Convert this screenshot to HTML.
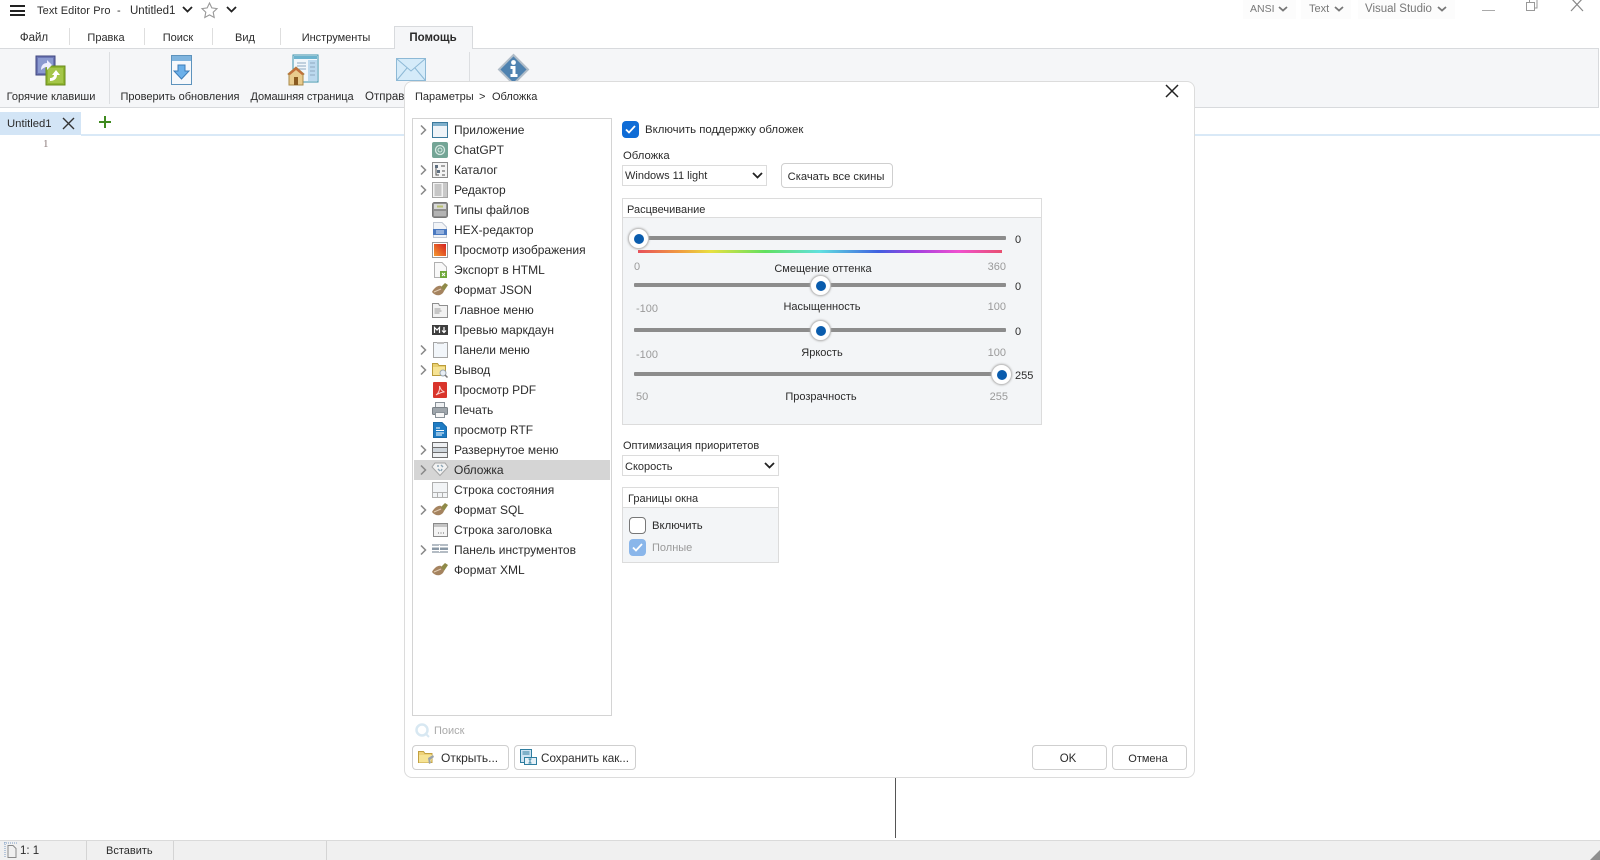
<!DOCTYPE html>
<html lang="ru"><head><meta charset="utf-8"><title>Text Editor Pro</title>
<style>
html,body{margin:0;padding:0;background:#fff}
#p{position:relative;width:1600px;height:860px;overflow:hidden;background:#fff;font:11px "Liberation Sans","Noto Sans CJK SC",sans-serif;color:#2b2b2b}
.t{position:absolute;white-space:nowrap;line-height:16px;height:16px;margin-top:1px}
.l{font-size:12px;margin-top:0}
.c{transform:translateX(-50%)}
.r{transform:translateX(-100%)}
.b{position:absolute;box-sizing:border-box}
.g{color:#9a9a9a}
svg{position:absolute;overflow:visible}
.btn{position:absolute;box-sizing:border-box;background:#fff;border:1px solid #cfcfcf;border-radius:4px}
.trk{position:absolute;height:4px;background:#8c8c8c;border-radius:1px}
.th{position:absolute;width:21px;height:21px;box-sizing:border-box;border-radius:50%;background:#fff;border:1px solid #c4c4c4;box-shadow:0 0 2px #aaa}
.th:after{content:"";position:absolute;left:4.5px;top:4.5px;width:10px;height:10px;border-radius:50%;background:#0a5cad}
</style></head><body><div id="p">

<!-- title bar -->
<div class="b" style="left:10px;top:5px;width:15px;height:2px;background:#222"></div>
<div class="b" style="left:10px;top:10px;width:15px;height:2px;background:#222"></div>
<div class="b" style="left:10px;top:14px;width:15px;height:2px;background:#222"></div>
<div class="t" style="left:37px;top:2px;letter-spacing:.1px">Text Editor Pro</div>
<div class="t" style="left:117px;top:2px">-</div>
<div class="t" style="left:130px;top:2px;font-size:11.5px">Untitled1</div>
<svg style="left:182px;top:6px" width="11" height="7" fill="none" stroke="#222" stroke-width="1.8"><path d="M1 1l4.5 4.5L10 1"/></svg>
<svg style="left:201px;top:2px" width="17" height="16" fill="#fff" stroke="#999" stroke-width="1.1"><path d="M8.500 1l2.300 4.900 5.200.7-3.800 3.600 1 5.300-4.700-2.600-4.700 2.600 1-5.300L1 6.600l5.200-.7z"/></svg>
<svg style="left:226px;top:6px" width="11" height="7" fill="none" stroke="#222" stroke-width="1.8"><path d="M1 1l4.500 4.500L10 1"/></svg>

<div class="b" style="left:1243px;top:0;width:53px;height:19px;background:#fcfcfc"></div>
<div class="b" style="left:1301px;top:0;width:50px;height:19px;background:#fcfcfc"></div>
<div class="b" style="left:1358px;top:0;width:97px;height:19px;background:#fcfcfc"></div>
<div class="t" style="left:1250px;top:0;color:#777;font-size:10.5px">ANSI</div>
<svg style="left:1278px;top:6px" width="10" height="6" fill="none" stroke="#777" stroke-width="1.800"><path d="M1 1l4 3.500L9 1"/></svg>
<div class="t" style="left:1309px;top:0;color:#777;font-size:11px">Text</div>
<svg style="left:1334px;top:6px" width="10" height="6" fill="none" stroke="#777" stroke-width="1.800"><path d="M1 1l4 3.500L9 1"/></svg>
<div class="t" style="left:1365px;top:0;color:#777;font-size:11.5px">Visual Studio</div>
<svg style="left:1437px;top:6px" width="10" height="6" fill="none" stroke="#777" stroke-width="1.800"><path d="M1 1l4 3.500L9 1"/></svg>
<div class="b" style="left:1482px;top:10px;width:13px;height:1px;background:#aaa"></div>
<svg style="left:1526px;top:0" width="12" height="11" fill="none" stroke="#999"><path d="M.5 2.500h8v8h-8zM3.500 2.500V0M8.500 8h2.500V0"/></svg>
<svg style="left:1570px;top:0" width="15" height="11" fill="none" stroke="#888" stroke-width="1.200"><path d="M1-2l12 13M13-2L1 11"/></svg>

<!-- menu tabs -->
<div class="t c" style="left:34px;top:29px;font-size:11.500px">Файл</div>
<div class="t c" style="left:106px;top:29px">Правка</div>
<div class="t c" style="left:178px;top:29px">Поиск</div>
<div class="t c" style="left:245px;top:29px">Вид</div>
<div class="t c" style="left:336px;top:29px">Инструменты</div>
<div class="b" style="left:69px;top:28px;width:1px;height:17px;background:#dedede"></div>
<div class="b" style="left:144px;top:28px;width:1px;height:17px;background:#dedede"></div>
<div class="b" style="left:212px;top:28px;width:1px;height:17px;background:#dedede"></div>
<div class="b" style="left:280px;top:28px;width:1px;height:17px;background:#dedede"></div>

<!-- ribbon -->
<div class="b" style="left:0;top:48px;width:1599px;height:60px;background:#f5f6f8;border-top:1px solid #d8dadd;border-bottom:1px solid #d8dadd;border-right:1px solid #d8dadd"></div>
<div class="b" style="left:394px;top:26px;width:79px;height:23px;background:#f5f6f8;border:1px solid #d8dadd;border-bottom:0"></div>
<div class="t c" style="left:433px;top:29px;font-weight:bold;font-size:11.500px">Помощь</div>
<div class="b" style="left:109px;top:52px;width:1px;height:52px;background:#dcdee1"></div>
<div class="b" style="left:469px;top:52px;width:1px;height:30px;background:#dcdee1"></div>

<svg style="left:35px;top:55px" width="32" height="31">
<rect x="1" y="1" width="19" height="19" fill="#6c76b5" stroke="#3f477f"/><rect x="3" y="3" width="15" height="15" fill="#8b9ad0"/>
<rect x="11" y="11" width="19" height="19" fill="#8fb52f" stroke="#6a8a1c"/><rect x="13" y="13" width="15" height="15" fill="#a5c64a"/>
<path d="M6 15c0-5 3-7 6-7V5l5 5-5 5v-3c-2 0-4 1-6 3z" fill="#eef"/><path d="M15 26c4 0 7-2 7-6h3l-4-5-4 5h2c0 2-2 3-4 3z" fill="#fff"/></svg>

<svg style="left:171px;top:55px" width="22" height="31">
<rect x=".5" y=".5" width="20" height="29" fill="#f6f8fb" stroke="#5d93bd"/><rect x="1" y="1" width="19" height="5" fill="#7fb4de"/>
<path d="M7 10h7v6h4l-7.500 8L3 16h4z" fill="#6bb0ea" stroke="#3d7db8"/></svg>

<svg style="left:288px;top:54px" width="32" height="33">
<rect x="5" y="1" width="25" height="27" fill="#f2f7fb" stroke="#3b93ad"/><rect x="6" y="2" width="23" height="3" fill="#6cb3ce"/><rect x="20" y="6" width="9" height="21" fill="#bcd9ee"/>
<path d="M9 9h9M9 12h9M9 15h9M22 9h5M22 13h5M22 17h5M22 21h5" stroke="#8fa9c0"/>
<path d="M0 20l8-7 8 7-1 1v10H1V21z" fill="#e9cb8d" stroke="#a98a4a"/><path d="M0 20l8-7 8 7-2 1-6-5-6 5z" fill="#c26f3a"/><rect x="6" y="23" width="4" height="8" fill="#8a5a20"/></svg>

<svg style="left:396px;top:58px" width="31" height="24">
<rect x=".5" y=".5" width="29" height="22" fill="#d5ebf9" stroke="#8db9d6"/><path d="M1 1l14 12L29 1M1 22l10-12M29 22L19 10" fill="none" stroke="#8db9d6"/></svg>

<svg style="left:498px;top:54px" width="31" height="28">
<path d="M15.500 1L30 15.500 15.500 30 1 15.500z" fill="#4f82b0" stroke="#b0bcc8" stroke-width="2"/>
<circle cx="15.500" cy="8.500" r="2.400" fill="#fff"/><path d="M12.500 12h5v8h2v3h-7v-3h2v-5h-2z" fill="#fff"/></svg>

<div class="t c" style="left:51px;top:88px">Горячие клавиши</div>
<div class="t c" style="left:180px;top:88px">Проверить обновления</div>
<div class="t c" style="left:302px;top:88px;letter-spacing:-.1px">Домашняя страница</div>
<div class="t" style="left:365px;top:88px;font-size:11.500px">Отправ</div>

<!-- doc tab -->
<div class="b" style="left:0;top:112px;width:81px;height:23px;background:#d3e5f6"></div>
<div class="b" style="left:81px;top:134px;width:1519px;height:2px;background:#d9e9f7"></div>
<div class="t" style="left:7px;top:115px;font-size:11.300px">Untitled1</div>
<svg style="left:62px;top:117px" width="13" height="13" fill="none" stroke="#333" stroke-width="1.400"><path d="M1 1l11 11M12 1L1 12"/></svg>
<svg style="left:99px;top:116px" width="12" height="12" fill="none" stroke="#3f8a1f" stroke-width="2"><path d="M6 0v12M0 6h12"/></svg>
<div class="t" style="left:43px;top:135px;font:11px/16px 'Liberation Serif',serif;color:#8a7a7a">1</div>

<!-- status bar -->
<div class="b" style="left:0;top:840px;width:1600px;height:20px;background:#f0f0f0;border-top:1px solid #dadada"></div>
<div class="b" style="left:86px;top:841px;width:1px;height:19px;background:#d4d4d4"></div>
<div class="b" style="left:173px;top:841px;width:1px;height:19px;background:#d4d4d4"></div>
<div class="b" style="left:326px;top:841px;width:1px;height:19px;background:#d4d4d4"></div>
<svg style="left:3px;top:841px" width="14" height="17" fill="none" stroke="#8a8a8a"><path d="M5 4.500h5l3 3v9H5z"/><path d="M1 2h13M2 1v16" stroke="#7c9cc4" stroke-dasharray="1 1"/></svg>
<div class="t" style="left:20px;top:842px;font-size:11.500px">1: 1</div>
<div class="t" style="left:106px;top:842px">Вставить</div>
<svg style="left:1590px;top:850px" width="10" height="10"><path d="M10 0v10H0z" fill="#8f8f8f"/></svg>
<div class="b" style="left:895px;top:777px;width:1px;height:61px;background:#555"></div>

<!-- dialog -->
<div class="b" style="left:404px;top:81px;width:791px;height:697px;background:#fff;border:1px solid #dcdcdc;border-radius:8px"></div>
<div class="t" style="left:415px;top:88px">Параметры</div>
<div class="t" style="left:479px;top:88px">&gt;</div>
<div class="t" style="left:492px;top:88px">Обложка</div>
<svg style="left:1165px;top:84px" width="14" height="14" fill="none" stroke="#222" stroke-width="1.500"><path d="M1 1l12 12M13 1L1 13"/></svg>

<!-- tree -->
<div class="b" style="left:412px;top:118px;width:200px;height:598px;border:1px solid #d4d4d4;background:#fff"></div>
<div class="b" style="left:414px;top:460px;width:196px;height:20px;background:#d5d5d5"></div>

<svg style="left:420px;top:125px" width="7" height="10" fill="none" stroke="#888" stroke-width="1.500"><path d="M1 .5l4.500 4.500L1 9.500"/></svg>
<svg style="left:420px;top:165px" width="7" height="10" fill="none" stroke="#888" stroke-width="1.500"><path d="M1 .5l4.500 4.500L1 9.500"/></svg>
<svg style="left:420px;top:185px" width="7" height="10" fill="none" stroke="#888" stroke-width="1.500"><path d="M1 .5l4.500 4.500L1 9.500"/></svg>
<svg style="left:420px;top:345px" width="7" height="10" fill="none" stroke="#888" stroke-width="1.500"><path d="M1 .5l4.500 4.500L1 9.500"/></svg>
<svg style="left:420px;top:365px" width="7" height="10" fill="none" stroke="#888" stroke-width="1.500"><path d="M1 .5l4.500 4.500L1 9.500"/></svg>
<svg style="left:420px;top:445px" width="7" height="10" fill="none" stroke="#888" stroke-width="1.500"><path d="M1 .5l4.500 4.500L1 9.500"/></svg>
<svg style="left:420px;top:465px" width="7" height="10" fill="none" stroke="#888" stroke-width="1.500"><path d="M1 .5l4.500 4.500L1 9.500"/></svg>
<svg style="left:420px;top:505px" width="7" height="10" fill="none" stroke="#888" stroke-width="1.500"><path d="M1 .5l4.500 4.500L1 9.500"/></svg>
<svg style="left:420px;top:545px" width="7" height="10" fill="none" stroke="#888" stroke-width="1.500"><path d="M1 .5l4.500 4.500L1 9.500"/></svg>

<!-- tree icons -->
<svg style="left:432px;top:122px" width="16" height="16"><rect x=".5" y=".5" width="15" height="15" fill="#f0f4f8" stroke="#3d7a9c"/><rect x="1" y="1" width="14" height="3" fill="#7fb0cc"/></svg>
<svg style="left:432px;top:142px" width="16" height="16"><rect width="16" height="16" rx="2" fill="#74a596"/><circle cx="8" cy="8" r="4.500" fill="none" stroke="#d6e8e2" stroke-width="1.300"/><circle cx="8" cy="8" r="2" fill="none" stroke="#d6e8e2"/></svg>
<svg style="left:432px;top:162px" width="16" height="16"><rect x=".5" y=".5" width="15" height="15" fill="#f4f4f4" stroke="#8a8a8a"/><path d="M3 3h3v3H3zM5 8h3v3H5z" fill="#5f6f80"/><path d="M4 6v7h3M9 4h4M10 9h3M10 13h3" fill="none" stroke="#555"/></svg>
<svg style="left:432px;top:182px" width="16" height="16"><rect x=".5" y=".5" width="15" height="15" fill="#f2f2f2" stroke="#a5a5a5"/><path d="M2.500 3h7M2.500 5h7M2.500 7h7M2.500 9h7M2.500 11h7M2.500 13h7" stroke="#9a9a9a"/><rect x="11" y="1" width="4" height="14" fill="#c9c9c9"/></svg>
<svg style="left:432px;top:202px" width="16" height="16"><rect x=".5" y=".5" width="15" height="15" rx="2" fill="#8f8f8f" stroke="#777"/><rect x="2" y="2" width="12" height="5" fill="#d8d8d8"/><rect x="5" y="3.500" width="6" height="2" fill="#b8c070"/><rect x="2" y="9" width="12" height="5" fill="#b4b4b4"/></svg>
<svg style="left:433px;top:222px" width="14" height="16"><path d="M.5.500H9L13.500 5v10.500H.500z" fill="#f2f4f7" stroke="#c0c8d4"/><rect x="0" y="7" width="14" height="6" fill="#4a79c0"/><path d="M3 9h8M3 11h8" stroke="#dce8f8"/></svg>
<svg style="left:432px;top:242px" width="16" height="16"><defs><linearGradient id="im" x1="1" y1="0" x2="0" y2="1"><stop offset="0" stop-color="#d42020"/><stop offset="1" stop-color="#f59a30"/></linearGradient></defs><rect x=".5" y=".5" width="15" height="15" fill="#fff" stroke="#9a9a9a"/><rect x="2" y="2" width="12" height="12" fill="url(#im)"/></svg>
<svg style="left:434px;top:262px" width="14" height="16"><path d="M.5.500H8L12.500 5v10.500H.500z" fill="#f8f8f8" stroke="#b0b0b0"/><rect x="6" y="9" width="7" height="7" fill="#6fa83a"/><path d="M8 11l3 3M11 11l-3 3" stroke="#fff"/></svg>
<svg style="left:432px;top:282px" width="16" height="16"><path d="M0 10C2 6 6 3 9 4l3 5c-2 5-8 6-12 1z" fill="#a5835f"/><path d="M9 5l4-4 3 2-4 6z" fill="#8f8a48"/><path d="M2 10l7-3" stroke="#e2cdb3"/></svg>
<svg style="left:432px;top:302px" width="16" height="16"><path d="M.5 1.500h6l1 2h8v12H.500z" fill="#f2f2f2" stroke="#8f8f8f"/><path d="M2.500 7h6M2.500 9h7M2.500 11h5" stroke="#9a9a9a"/></svg>
<svg style="left:432px;top:325px" width="16" height="10"><rect width="16" height="10" fill="#3e3e3e"/><path d="M2.500 8V2.500L5 5l2.500-2.500V8M12 2v5M10 5.500l2 2 2-2" fill="none" stroke="#fff" stroke-width="1.200"/></svg>
<svg style="left:433px;top:342px" width="15" height="16"><rect x=".5" y=".5" width="14" height="15" fill="#f2f6fa" stroke="#a5a5a5"/><rect x="4" y="0" width="7" height="2" fill="#c0c0c0"/></svg>
<svg style="left:432px;top:362px" width="16" height="16"><path d="M.5 1.500h5l1.500 2h6.500v10H.500z" fill="#e9cf6e" stroke="#b99b3a"/><rect x="1" y="5" width="12" height="8" fill="#f6e394"/><circle cx="11" cy="11" r="3" fill="#e8eef4" stroke="#9aa6b2"/><path d="M13 13l2.500 2.500" stroke="#777" stroke-width="1.500"/></svg>
<svg style="left:433px;top:382px" width="14" height="16"><rect width="14" height="16" rx="1" fill="#d9342b"/><path d="M3 13c3-2 4-6 3.500-9 1 3 2 5 5 6-3 0-5 1-8.500 3z" fill="none" stroke="#fbd7d5"/></svg>
<svg style="left:432px;top:402px" width="16" height="16"><rect x="3.500" y=".5" width="9" height="5" fill="#eef0f2" stroke="#8a9299"/><rect x=".5" y="5.500" width="15" height="7" rx="1" fill="#9ea5ab" stroke="#7a8187"/><rect x="3.500" y="10.500" width="9" height="5" fill="#f6f6f6" stroke="#8a9299"/></svg>
<svg style="left:433px;top:422px" width="14" height="16"><path d="M.5.500H9L13.500 5v10.500H.500z" fill="#1f7cc4" stroke="#1a6aa8"/><path d="M3 6h4M3 8.500h8M3 11h8M3 13h6" stroke="#fff"/></svg>
<svg style="left:432px;top:442px" width="16" height="16"><rect x=".5" y=".5" width="15" height="15" fill="#eef0f2" stroke="#6e6e6e"/><path d="M1 5.500h14M1 10.500h14" stroke="#6e6e6e"/><rect x="1" y="6" width="14" height="4" fill="#cfd6dc"/></svg>
<svg style="left:432px;top:462px" width="16" height="14"><path d="M3 1h10l3 4-8 8.500L0 5z" fill="#f2f2f2" stroke="#a5a5a5"/><path d="M5 4h2M9 3l2 2M6 7l2 2M10 7l-1 2" stroke="#8da5b5" stroke-width="1.400"/></svg>
<svg style="left:432px;top:482px" width="16" height="16"><rect x=".5" y=".5" width="15" height="15" fill="#f2f4f6" stroke="#b0b0b0"/><path d="M1 10.500h14M5.500 10.500V15M10.500 10.500V15" stroke="#b0b0b0"/></svg>
<svg style="left:432px;top:502px" width="16" height="16"><path d="M0 10C2 6 6 3 9 4l3 5c-2 5-8 6-12 1z" fill="#a5835f"/><path d="M9 5l4-4 3 2-4 6z" fill="#8f8a48"/><path d="M2 10l7-3" stroke="#e2cdb3"/></svg>
<svg style="left:433px;top:522px" width="15" height="16"><rect x=".5" y="1.500" width="14" height="13" fill="#f4f4f4" stroke="#8a8a8a"/><rect x="1" y="2" width="13" height="3" fill="#c4c4c4"/><path d="M5 11h1M7.500 11h1M10 11h1" stroke="#666"/></svg>
<svg style="left:432px;top:544px" width="16" height="9"><rect y="0" width="16" height="2" fill="#b4bcc4"/><rect y="3.500" width="16" height="2.500" fill="#8a98a6"/><rect y="7" width="16" height="2" fill="#b4bcc4"/><rect x="7" y="1" width="1" height="7" fill="#fff"/></svg>
<svg style="left:432px;top:562px" width="16" height="16"><path d="M0 10C2 6 6 3 9 4l3 5c-2 5-8 6-12 1z" fill="#a5835f"/><path d="M9 5l4-4 3 2-4 6z" fill="#8f8a48"/><path d="M2 10l7-3" stroke="#e2cdb3"/></svg>

<div class="t l" style="left:454px;top:122px">Приложение</div>
<div class="t l" style="left:454px;top:142px">ChatGPT</div>
<div class="t l" style="left:454px;top:162px">Каталог</div>
<div class="t l" style="left:454px;top:182px">Редактор</div>
<div class="t l" style="left:454px;top:202px">Типы файлов</div>
<div class="t l" style="left:454px;top:222px">HEX-редактор</div>
<div class="t l" style="left:454px;top:242px">Просмотр изображения</div>
<div class="t l" style="left:454px;top:262px">Экспорт в HTML</div>
<div class="t l" style="left:454px;top:282px">Формат JSON</div>
<div class="t l" style="left:454px;top:302px">Главное меню</div>
<div class="t l" style="left:454px;top:322px">Превью маркдаун</div>
<div class="t l" style="left:454px;top:342px">Панели меню</div>
<div class="t l" style="left:454px;top:362px">Вывод</div>
<div class="t l" style="left:454px;top:382px">Просмотр PDF</div>
<div class="t l" style="left:454px;top:402px">Печать</div>
<div class="t l" style="left:454px;top:422px">просмотр RTF</div>
<div class="t l" style="left:454px;top:442px">Развернутое меню</div>
<div class="t l" style="left:454px;top:462px">Обложка</div>
<div class="t l" style="left:454px;top:482px">Строка состояния</div>
<div class="t l" style="left:454px;top:502px">Формат SQL</div>
<div class="t l" style="left:454px;top:522px">Строка заголовка</div>
<div class="t l" style="left:454px;top:542px">Панель инструментов</div>
<div class="t l" style="left:454px;top:562px">Формат XML</div>

<!-- right column -->
<div class="b" style="left:622px;top:121px;width:17px;height:17px;background:#0f6cd6;border-radius:4px"></div>
<svg style="left:625px;top:125px" width="11" height="9" fill="none" stroke="#fff" stroke-width="1.800"><path d="M1 4.500l3 3 6-6.500"/></svg>
<div class="t" style="left:645px;top:121px;font-size:11.400px">Включить поддержку обложек</div>
<div class="t" style="left:623px;top:147px;font-size:11.300px">Обложка</div>
<div class="b" style="left:622px;top:165px;width:145px;height:21px;background:#fff;border:1px solid #dcdcdc"></div>
<div class="t" style="left:625px;top:167px">Windows 11 light</div>
<svg style="left:752px;top:172px" width="11" height="7" fill="none" stroke="#222" stroke-width="1.800"><path d="M1 1l4.500 4.500L10 1"/></svg>
<div class="btn" style="left:781px;top:163px;width:112px;height:25px"></div>
<div class="t c" style="left:836px;top:168px;font-size:11.200px">Скачать все скины</div>

<!-- group 1 -->
<div class="b" style="left:622px;top:198px;width:420px;height:227px;background:#f3f5f7;border:1px solid #dcdcdc"></div>
<div class="b" style="left:623px;top:199px;width:418px;height:19px;background:#fff;border-bottom:1px solid #dcdcdc"></div>
<div class="t" style="left:627px;top:201px">Расцвечивание</div>

<div class="trk" style="left:634px;top:236px;width:372px"></div>
<div class="b" style="left:638px;top:250px;width:364px;height:3px;background:linear-gradient(90deg,#e8505a,#f0a040 12%,#e8e040 20%,#60e060 35%,#60e0e0 50%,#4060e0 66%,#a040e0 76%,#f050d0 88%,#e85070)"></div>
<div class="th" style="left:628px;top:228px"></div>
<div class="t" style="left:1015px;top:231px">0</div>
<div class="t g" style="left:634px;top:258px">0</div>
<div class="t c" style="left:823px;top:260px">Смещение оттенка</div>
<div class="t g r" style="left:1006px;top:258px">360</div>

<div class="trk" style="left:634px;top:283px;width:372px"></div>
<div class="th" style="left:810px;top:275px"></div>
<div class="t" style="left:1015px;top:278px">0</div>
<div class="t g" style="left:636px;top:300px">-100</div>
<div class="t c" style="left:822px;top:298px">Насыщенность</div>
<div class="t g r" style="left:1006px;top:298px">100</div>

<div class="trk" style="left:634px;top:328px;width:372px"></div>
<div class="th" style="left:810px;top:320px"></div>
<div class="t" style="left:1015px;top:323px">0</div>
<div class="t g" style="left:636px;top:346px">-100</div>
<div class="t c" style="left:822px;top:344px">Яркость</div>
<div class="t g r" style="left:1006px;top:344px">100</div>

<div class="trk" style="left:634px;top:372px;width:372px"></div>
<div class="th" style="left:991px;top:364px"></div>
<div class="t" style="left:1015px;top:367px">255</div>
<div class="t g" style="left:636px;top:388px">50</div>
<div class="t c" style="left:821px;top:388px">Прозрачность</div>
<div class="t g r" style="left:1008px;top:388px">255</div>

<!-- optimisation -->
<div class="t" style="left:623px;top:437px">Оптимизация приоритетов</div>
<div class="b" style="left:622px;top:455px;width:157px;height:21px;background:#fff;border:1px solid #dcdcdc"></div>
<div class="t" style="left:625px;top:458px">Скорость</div>
<svg style="left:764px;top:462px" width="11" height="7" fill="none" stroke="#222" stroke-width="1.800"><path d="M1 1l4.500 4.500L10 1"/></svg>

<!-- group 2 -->
<div class="b" style="left:622px;top:487px;width:157px;height:76px;background:#f3f5f7;border:1px solid #dcdcdc"></div>
<div class="b" style="left:623px;top:488px;width:155px;height:20px;background:#fff;border-bottom:1px solid #dcdcdc"></div>
<div class="t" style="left:628px;top:490px">Границы окна</div>
<div class="b" style="left:629px;top:517px;width:17px;height:17px;background:#fff;border:1px solid #777;border-radius:4px"></div>
<div class="t" style="left:652px;top:517px;font-size:11.300px">Включить</div>
<div class="b" style="left:629px;top:539px;width:17px;height:17px;background:#8ab6ea;border-radius:4px"></div>
<svg style="left:632px;top:543px" width="11" height="9" fill="none" stroke="#fff" stroke-width="1.800"><path d="M1 4.500l3 3 6-6.500"/></svg>
<div class="t g" style="left:652px;top:539px">Полные</div>

<!-- search -->
<svg style="left:415px;top:723px" width="15" height="15" fill="none"><circle cx="7" cy="7" r="5.500" stroke="#d8e8f2" stroke-width="2.500"/><path d="M11 11l3 3" stroke="#d8e8f2" stroke-width="2"/></svg>
<div class="t" style="left:434px;top:722px;color:#aaa">Поиск</div>

<!-- buttons -->
<div class="btn" style="left:412px;top:745px;width:97px;height:25px"></div>
<svg style="left:418px;top:749px" width="17" height="16"><path d="M.5 2.500h5l1.500 2h7v9H.500z" fill="#eed27a" stroke="#c2a040"/><path d="M1 6h14l-2 7.500H1z" fill="#f6e394"/><path d="M10 9l5-3 1 2-4 3 1 3-2 1z" fill="#9aa2aa"/></svg>
<div class="t l" style="left:441px;top:750px">Открыть...</div>
<div class="btn" style="left:514px;top:745px;width:122px;height:25px"></div>
<svg style="left:520px;top:749px" width="17" height="16"><rect x=".5" y=".5" width="11" height="13" fill="#cfe3f2" stroke="#2f7ea0"/><path d="M2.500 3h7M2.500 5h7" stroke="#2f7ea0"/><rect x="4.500" y="8.500" width="12" height="7" fill="#e6f1f8" stroke="#2f7ea0"/><path d="M10 10v4M8.500 10h3M8.500 14h3" stroke="#2f7ea0"/></svg>
<div class="t" style="left:541px;top:750px;font-size:11.700px">Сохранить как...</div>
<div class="btn" style="left:1032px;top:745px;width:75px;height:25px"></div>
<div class="t c" style="left:1068px;top:750px;font-size:11.500px">OK</div>
<div class="btn" style="left:1112px;top:745px;width:75px;height:25px"></div>
<div class="t c" style="left:1148px;top:750px">Отмена</div>

</div></body></html>
